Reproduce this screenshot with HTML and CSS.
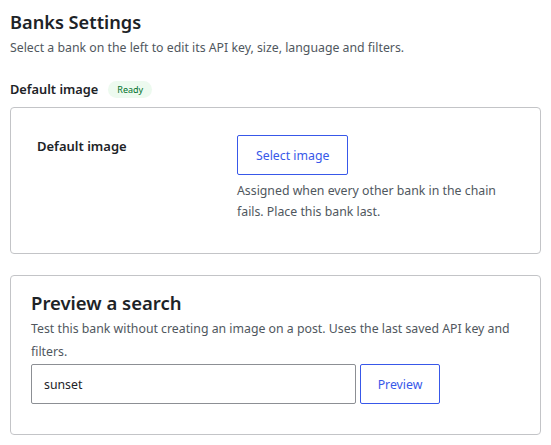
FILE: index.html
```html
<!DOCTYPE html>
<html lang="en">
<head>
    <meta charset="UTF-8">
    <meta name="viewport" content="width=device-width, initial-scale=1.0">
    <title>Banks Settings</title>
    <link rel="stylesheet" href="styles.css">
</head>
<body>
    <div class="wrap">
        <h1>Banks Settings</h1>
        <p class="intro">Select a bank on the left to edit its API key, size, language and filters.</p>

        <!-- Bank heading -->
        <div class="bank-head">
            <h2>Default image</h2>
            <span class="badge">Ready</span>
        </div>

        <!-- Bank settings -->
        <div class="card card-settings">
            <div class="field-row">
                <div class="field-label">Default image</div>
                <div class="field-control">
                    <button type="button" class="btn">Select image</button>
                    <p class="help">Assigned when every other bank in the chain fails. Place this bank last.</p>
                </div>
            </div>
        </div>

        <!-- Preview -->
        <div class="card card-preview">
            <h3>Preview a search</h3>
            <p class="help">Test this bank without creating an image on a post. Uses the last saved API key and filters.</p>
            <div class="preview-row">
                <input type="text" class="search-input" value="sunset">
                <button type="button" class="btn btn-small">Preview</button>
            </div>
        </div>
    </div>
</body>
</html>
```

FILE: styles.css
```css
* {
    margin: 0;
    padding: 0;
    box-sizing: border-box;
}

body {
    font-family: 'Noto Sans', sans-serif;
    background: #fff;
    color: #1d2327;
    font-size: 12.3px;
}

.wrap {
    padding: 10px 10px 0 10px;
}

h1 {
    font-size: 18.2px;
    font-weight: 600;
    line-height: 24px;
    margin-bottom: 5px;
}

.intro {
    color: #50575e;
    line-height: 18px;
    margin-bottom: 22px;
}

.bank-head {
    display: flex;
    align-items: center;
    gap: 10px;
    margin-bottom: 8px;
}

h2 {
    font-size: 12.8px;
    font-weight: 600;
    line-height: 20px;
}

.badge {
    background: #edfaef;
    color: #00712a;
    font-size: 9px;
    line-height: 17px;
    padding: 0 9px;
    border-radius: 9px;
}

.card {
    border: 1px solid #c3c4c7;
    border-radius: 4px;
    background: #fff;
}

.card-settings {
    padding: 27px 26px 31px 26px;
    margin-bottom: 21px;
}

.field-row {
    display: flex;
}

.field-label {
    width: 200px;
    font-size: 13px;
    font-weight: 600;
    line-height: 20px;
    padding-top: 1px;
}

.field-control {
    flex: 1;
}

.btn {
    font-family: inherit;
    font-size: 12.3px;
    color: #3858e9;
    background: #fff;
    border: 1px solid #3858e9;
    border-radius: 2px;
    height: 40px;
    padding: 0 18px;
    cursor: pointer;
}

.help {
    color: #50575e;
    line-height: 21px;
    margin-top: 5px;
}

.card-preview {
    padding: 13px 20px 30px 20px;
}

h3 {
    font-size: 18.5px;
    font-weight: 600;
    line-height: 28px;
}

.card-preview .help {
    line-height: 23px;
    margin-top: 0;
    margin-bottom: 1px;
}

.preview-row {
    display: flex;
    gap: 4px;
}

.search-input {
    width: 325px;
    height: 40px;
    border: 1px solid #8c8f94;
    border-radius: 2px;
    padding: 0 12px;
    font-family: inherit;
    font-size: 12.3px;
    color: #1d2327;
}

.btn-small {
    width: 80px;
    padding: 0;
}
```
